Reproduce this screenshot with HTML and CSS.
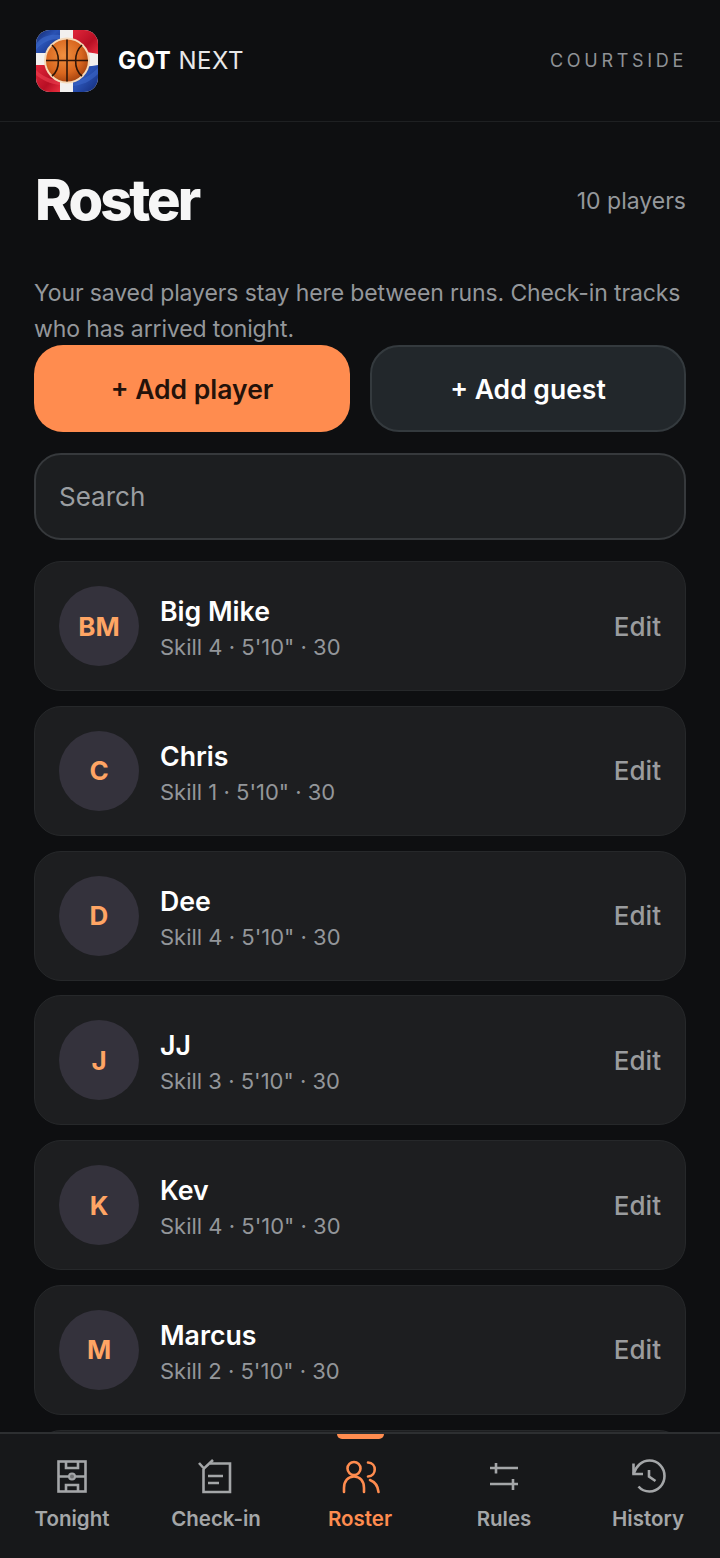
FILE: index.html
```html
<!DOCTYPE html>
<html lang="en">
<head>
    <meta charset="UTF-8">
    <meta name="viewport" content="width=device-width, initial-scale=1.0">
    <title>Got Next</title>
    <link rel="stylesheet" href="styles.css">
</head>
<body>

<!-- Top bar -->
<header class="top-bar">
    <div class="brand">
        <svg class="logo" viewBox="0 0 62 62">
            <defs>
                <clipPath id="logoClip"><rect width="62" height="62" rx="14"/></clipPath>
                <radialGradient id="ballFill" cx="42%" cy="38%" r="65%">
                    <stop offset="0" stop-color="#f09040"/>
                    <stop offset="0.65" stop-color="#d9671f"/>
                    <stop offset="1" stop-color="#a8440f"/>
                </radialGradient>
                <linearGradient id="blueFill" x1="0" y1="0" x2="1" y2="1">
                    <stop offset="0" stop-color="#12286e"/>
                    <stop offset="0.45" stop-color="#2a52b4"/>
                    <stop offset="1" stop-color="#122a78"/>
                </linearGradient>
                <linearGradient id="redFill" x1="0" y1="0" x2="1" y2="1">
                    <stop offset="0" stop-color="#e0263a"/>
                    <stop offset="0.6" stop-color="#b80f24"/>
                    <stop offset="1" stop-color="#e8303f"/>
                </linearGradient>
            </defs>
            <g clip-path="url(#logoClip)">
                <rect width="62" height="62" fill="#f2f0ee"/>
                <rect width="24" height="23" fill="url(#blueFill)"/>
                <path d="M37 0H62V24C54 22 46 22 37 23Z" fill="url(#redFill)"/>
                <path d="M0 35H24V62H0Z" fill="url(#redFill)"/>
                <path d="M37 36C46 36 54 37 62 35V62H37Z" fill="url(#blueFill)"/>
                <path d="M0 14C6 6 14 4 24 5V9C14 9 6 12 0 20Z" fill="#3a66c8" opacity="0.7"/>
                <path d="M62 44C54 52 46 55 37 56V52C46 50 54 46 62 38Z" fill="#3a66c8" opacity="0.6"/>
                <path d="M0 45C6 50 14 54 24 55V50C14 50 6 46 0 40Z" fill="#ec4050" opacity="0.6"/>
                <circle cx="31" cy="30.500" r="23" fill="#f6d9b8"/>
                <circle cx="31" cy="30.500" r="21" fill="url(#ballFill)"/>
                <g fill="none" stroke="#2e1508" stroke-width="1.6">
                    <path d="M31 9.500V51.500"/>
                    <path d="M10 30.500H52"/>
                    <path d="M16 15C24 22 25 39 16 46"/>
                    <path d="M46 15C38 22 37 39 46 46"/>
                </g>
            </g>
        </svg>
        <div class="brand-name"><b>GOT</b> NEXT</div>
    </div>
    <div class="courtside">COURTSIDE</div>
</header>

<main class="content">
    <div class="title-row">
        <h1>Roster</h1>
        <span class="player-count">10 players</span>
    </div>
    <p class="intro">Your saved players stay here between runs. Check-in tracks who has arrived tonight.</p>

    <div class="add-buttons">
        <button class="add-btn primary">+ Add player</button>
        <button class="add-btn secondary">+ Add guest</button>
    </div>

    <div class="search-box">Search</div>

    <div class="player-list">
        <div class="player-card">
            <div class="avatar">BM</div>
            <div class="player-info">
                <div class="player-name">Big Mike</div>
                <div class="player-meta">Skill 4 · 5'10" · 30</div>
            </div>
            <span class="edit-link">Edit</span>
        </div>
        <div class="player-card">
            <div class="avatar">C</div>
            <div class="player-info">
                <div class="player-name">Chris</div>
                <div class="player-meta">Skill 1 · 5'10" · 30</div>
            </div>
            <span class="edit-link">Edit</span>
        </div>
        <div class="player-card">
            <div class="avatar">D</div>
            <div class="player-info">
                <div class="player-name">Dee</div>
                <div class="player-meta">Skill 4 · 5'10" · 30</div>
            </div>
            <span class="edit-link">Edit</span>
        </div>
        <div class="player-card">
            <div class="avatar">J</div>
            <div class="player-info">
                <div class="player-name">JJ</div>
                <div class="player-meta">Skill 3 · 5'10" · 30</div>
            </div>
            <span class="edit-link">Edit</span>
        </div>
        <div class="player-card">
            <div class="avatar">K</div>
            <div class="player-info">
                <div class="player-name">Kev</div>
                <div class="player-meta">Skill 4 · 5'10" · 30</div>
            </div>
            <span class="edit-link">Edit</span>
        </div>
        <div class="player-card">
            <div class="avatar">M</div>
            <div class="player-info">
                <div class="player-name">Marcus</div>
                <div class="player-meta">Skill 2 · 5'10" · 30</div>
            </div>
            <span class="edit-link">Edit</span>
        </div>
        <!-- Next card is cut off by the tabs, only its top edge shows -->
        <div class="player-card"></div>
    </div>
</main>

<!-- Bottom tabs -->
<nav class="tab-bar">
    <div class="tab">
        <svg class="tab-icon" viewBox="0 0 40 40">
            <rect x="6.500" y="4.500" width="27" height="30"/>
            <path d="M6.500 19.500H33.500M14 4.500V11H26V4.500M14 34.500V28H26V34.500"/>
            <circle class="spot" cx="20" cy="19.500" r="3"/>
        </svg>
        <span>Tonight</span>
    </div>
    <div class="tab">
        <svg class="tab-icon" viewBox="0 0 40 40">
            <path d="M14 6.500H34V35H7.500V12"/>
            <path d="M3 6L8 11.500L17 3"/>
            <path d="M12 19H27M12 26H23"/>
        </svg>
        <span>Check-in</span>
    </div>
    <div class="tab active">
        <div class="tab-marker"></div>
        <svg class="tab-icon" viewBox="0 0 40 40">
            <circle cx="14" cy="11.500" r="6.500"/>
            <path d="M4 35V31C4 24 8 19.500 14 19.500C20 19.500 24 24 24 31V35"/>
            <path d="M28 5.500C37 6 37 19 28 19.500"/>
            <path d="M30 23C35 25 38 29 38.500 35"/>
        </svg>
        <span>Roster</span>
    </div>
    <div class="tab">
        <svg class="tab-icon" viewBox="0 0 40 40">
            <path d="M6 11H34M12 6V16.500"/>
            <path d="M6 27H34M29 22V33"/>
        </svg>
        <span>Rules</span>
    </div>
    <div class="tab">
        <svg class="tab-icon" viewBox="0 0 40 40">
            <path d="M5.500 6.500V17H15"/>
            <path d="M5.500 17C8 9 14 3.500 21.500 3.500C30 3.500 36.500 10.500 36.500 19C36.500 27.500 30 34.500 21.500 34.500C17 34.500 13 32.500 10.500 29.500"/>
            <path d="M21 13V19.500L27.500 24"/>
        </svg>
        <span>History</span>
    </div>
</nav>

</body>
</html>
```

FILE: styles.css
```css
/* General */
html, body {
    height: 100%;
}

body {
    margin: 0;
    padding: 0;
    overflow: hidden;
    background-color: #0e0f11;
    color: #ffffff;
    font-family: 'Inter', 'Noto Sans', sans-serif;
}

/* Top bar */
.top-bar {
    display: flex;
    align-items: center;
    justify-content: space-between;
    height: 122px;
    box-sizing: border-box;
    padding: 0 36px;
    border-bottom: 1px solid #1e2022;
}

.brand {
    display: flex;
    align-items: center;
    gap: 20px;
}

.logo {
    width: 62px;
    height: 62px;
}

.brand-name {
    font-size: 24px;
    letter-spacing: 0.5px;
    color: #e8e8e8;
}

.brand-name b {
    font-weight: 700;
    color: #ffffff;
}

.courtside {
    font-size: 18px;
    letter-spacing: 3.7px;
    color: #8f9296;
    margin-right: -3px;
}

/* Page content */
.content {
    padding: 0 34px;
}

.title-row {
    display: flex;
    align-items: center;
    justify-content: space-between;
    padding-top: 47px;
}

h1 {
    margin: 0;
    font-size: 56px;
    line-height: 62px;
    font-weight: 800;
    letter-spacing: -3px;
    padding-left: 1px;
    color: #f6f6f6;
}

.player-count {
    margin-top: 2px;
    font-size: 23px;
    color: #95989c;
}

.intro {
    margin: 44px 0 0;
    font-size: 23px;
    line-height: 36px;
    letter-spacing: -0.12px;
    color: #94979b;
}

/* Add buttons */
.add-buttons {
    display: grid;
    grid-template-columns: 1fr 1fr;
    gap: 20px;
    margin-top: -2px;
}

.add-btn {
    height: 87px;
    border-radius: 29px;
    font-family: inherit;
    font-size: 26.500px;
    font-weight: 600;
}

.add-btn.primary {
    background-color: #ff8c4f;
    color: #24120a;
    border: none;
}

.add-btn.secondary {
    background-color: #22272b;
    color: #ffffff;
    border: 2px solid #343a3e;
}

/* Search */
.search-box {
    display: flex;
    align-items: center;
    height: 87px;
    box-sizing: border-box;
    margin-top: 21px;
    padding: 0 23px;
    border: 2px solid #36393c;
    border-radius: 27px;
    background-color: #1c1e20;
    font-size: 26px;
    color: #9b9ea1;
}

/* Player list */
.player-list {
    display: flex;
    flex-direction: column;
    gap: 14.750px;
    margin-top: 21px;
}

.player-card {
    display: flex;
    align-items: center;
    gap: 21px;
    height: 130px;
    flex-shrink: 0;
    box-sizing: border-box;
    padding: 0 24px;
    border: 1px solid #26282a;
    border-radius: 27px;
    background-color: #1d1e20;
}

.avatar {
    display: flex;
    align-items: center;
    justify-content: center;
    flex-shrink: 0;
    width: 80px;
    height: 80px;
    border-radius: 50%;
    background-color: #34323c;
    color: #ffa564;
    font-size: 26px;
    font-weight: 700;
}

.player-info {
    flex: 1;
    padding-top: 6px;
}

.player-name {
    font-size: 26.700px;
    line-height: 36px;
    font-weight: 600;
}

.player-meta {
    font-size: 22px;
    line-height: 36px;
    color: #93969a;
}

.edit-link {
    font-size: 26px;
    font-weight: 500;
    color: #9a9c9e;
}

/* Bottom tabs */
.tab-bar {
    position: fixed;
    left: 0;
    bottom: 0;
    width: 100%;
    height: 126px;
    box-sizing: border-box;
    display: grid;
    grid-template-columns: repeat(5, 1fr);
    border-top: 2px solid #2d2f31;
    background-color: #17181a;
}

.tab {
    position: relative;
    display: flex;
    flex-direction: column;
    align-items: center;
    padding-top: 23px;
    font-size: 20.500px;
    font-weight: 600;
    color: #a4a6a8;
}

.tab span {
    margin-top: 8px;
    line-height: 28px;
}

.tab-icon {
    width: 40px;
    height: 40px;
    fill: none;
    stroke: #a4a6a8;
    stroke-width: 2.600;
}

.tab-icon .spot {
    stroke-width: 2;
    fill: #6f7173;
}

.tab.active {
    color: #ff8c4f;
}

.tab.active .tab-icon {
    stroke: #ff8c4f;
    stroke-linecap: round;
}

.tab-marker {
    position: absolute;
    top: 0;
    left: 49px;
    width: 47px;
    height: 5px;
    border-radius: 0 0 6px 6px;
    background-color: #ff8c4f;
}
```
